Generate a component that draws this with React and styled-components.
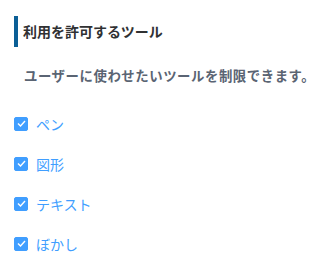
import React from "react";
import styled, { createGlobalStyle } from "styled-components";

const Global = createGlobalStyle`
  body {
    margin: 0;
    background: #fff;
    font-family: "Noto Sans CJK JP", "Noto Sans", sans-serif;
  }
`;

const Container = styled.div`
  padding: 16px 14px;
`;

const Heading = styled.h3`
  margin: 0;
  border-left: 4px solid #0b5f96;
  padding-left: 5px;
  height: 31px;
  line-height: 31px;
  font-size: 14px;
  font-weight: 700;
  color: #303133;
`;

const Description = styled.p`
  margin: 16px 0 0 10px;
  font-size: 13.4px;
  line-height: 24px;
  letter-spacing: 0.55px;
  font-weight: 700;
  color: #5a6473;
  white-space: nowrap;
`;

const List = styled.div`
  display: flex;
  flex-direction: column;
  gap: 19px;
  margin-top: 26px;
`;

const Option = styled.label`
  display: flex;
  align-items: center;
  gap: 8px;
  height: 21px;
  font-size: 14px;
  color: #409eff;
  cursor: pointer;
`;

const Box = styled.span`
  width: 14px;
  height: 14px;
  border-radius: 2px;
  background: ${(p) => (p.checked ? "#409eff" : "#fff")};
  border: 1px solid ${(p) => (p.checked ? "#409eff" : "#dcdfe6")};
  box-sizing: border-box;
  display: flex;
  align-items: center;
  justify-content: center;
`;

const tools = ["ペン", "図形", "テキスト", "ぼかし"];

const App = () => {
  return (
    <Container>
      <Global />
      <Heading>利用を許可するツール</Heading>
      <Description>ユーザーに使わせたいツールを制限できます。</Description>
      <List>
        {tools.map((t) => (
          <Option key={t}>
            <Box checked>
              <svg width="9" height="7" viewBox="0 0 9 7">
                <path d="M1 3.5 L3.5 6 L8 1" fill="none" stroke="#fff" strokeWidth="1.4" />
              </svg>
            </Box>
            {t}
          </Option>
        ))}
      </List>
    </Container>
  );
};

export default App;
